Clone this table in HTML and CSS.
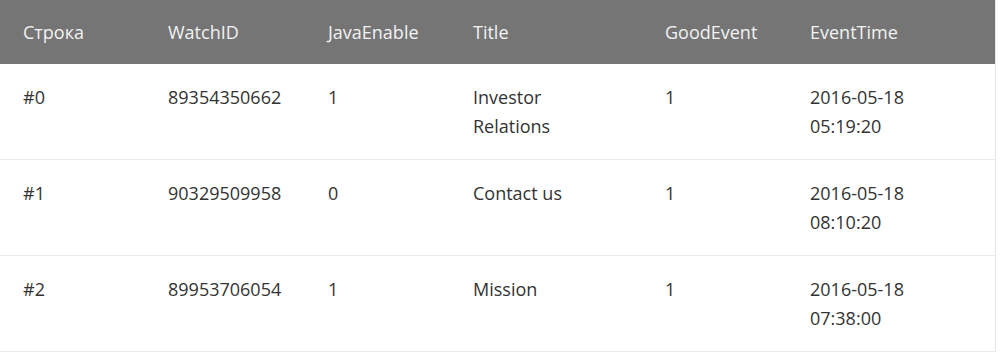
FILE: index.html
```html
<!DOCTYPE html>
<html lang="ru">
<head>
<meta charset="utf-8">
<title>Table</title>
<link rel="stylesheet" href="styles.css">
</head>
<body>
<table class="data">
  <colgroup>
    <col class="c1"><col class="c2"><col class="c3"><col class="c4"><col class="c5"><col class="c6">
  </colgroup>
  <thead>
    <tr><th>Строка</th><th>WatchID</th><th>JavaEnable</th><th>Title</th><th>GoodEvent</th><th>EventTime</th></tr>
  </thead>
  <tbody>
    <tr><td>#0</td><td>89354350662</td><td>1</td><td>Investor Relations</td><td>1</td><td>2016-05-18 05:19:20</td></tr>
    <tr><td>#1</td><td>90329509958</td><td>0</td><td>Contact us</td><td>1</td><td>2016-05-18 08:10:20</td></tr>
    <tr><td>#2</td><td>89953706054</td><td>1</td><td>Mission</td><td>1</td><td>2016-05-18 07:38:00</td></tr>
  </tbody>
</table>
</body>
</html>
```
FILE: styles.css
```css
html, body {
  margin: 0;
  padding: 0;
  background: #ffffff;
}
body {
  font-family: "Open Sans", "Liberation Sans", sans-serif;
  font-size: 18px;
  color: #333333;
}
.data {
  width: 996px;
  border-collapse: collapse;
  table-layout: fixed;
  border-right: 1px solid #e6e6e6;
}
.c1 { width: 145px; }
.c2 { width: 160px; }
.c3 { width: 145px; }
.c4 { width: 192px; }
.c5 { width: 145px; }
.c6 { width: auto; }
.data th {
  background: #757575;
  color: #f2f2f2;
  font-weight: 400;
  text-align: left;
  line-height: 29px;
  padding: 18px 23px 17px;
}
.data td {
  line-height: 29px;
  padding: 19px 23px 18px;
  vertical-align: top;
  border-bottom: 1px solid #ebebeb;
}
```
